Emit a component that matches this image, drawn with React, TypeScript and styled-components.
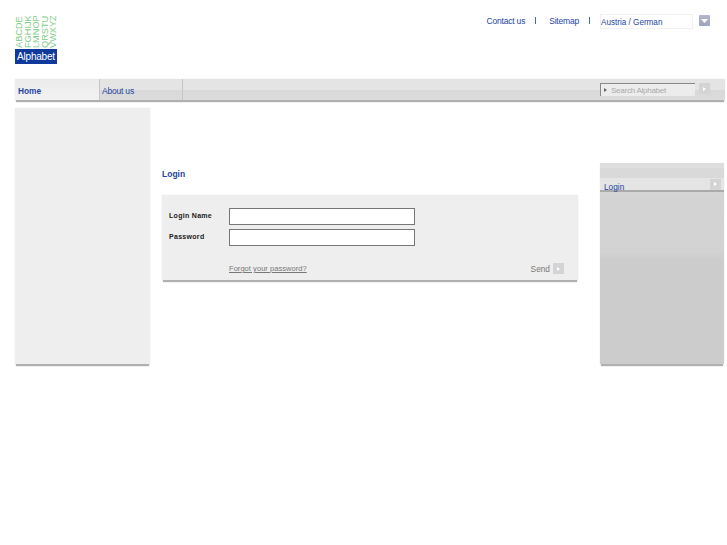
import styled, { createGlobalStyle } from "styled-components";

const panelShadow = "0 3px 1px -1px #b0b0b0, 0 0 1px #e2e2e2";

const Global = createGlobalStyle`
  html, body {
    margin: 0;
    padding: 0;
    background: #fff;
    font-family: "Liberation Sans", Arial, sans-serif;
    font-size: 8px;
    color: #24459f;
  }
`;

const Page = styled.div`
  width: 727px;
  height: 545px;
  box-sizing: border-box;
  padding: 15px 2px 0 15px;
  overflow: hidden;
`;

const Header = styled.header`
  display: flex;
  justify-content: space-between;
  height: 64px;
`;

const Logo = styled.div`
  width: 42px;
  display: flex;
  flex-direction: column;
`;

const LetterColumns = styled.div`
  height: 34px;
  width: 42px;
  display: flex;
  justify-content: space-between;
`;

const LetterSlot = styled.div`
  width: 8px;
  height: 33px;
`;

const LetterRow = styled.span`
  display: block;
  width: max-content;
  transform-origin: 0 0;
  transform: translate(0, 33px) rotate(-90deg);
  white-space: nowrap;
  font-size: 9.2px;
  line-height: 8px;
  color: #7fcc86;
`;

const LogoName = styled.div`
  height: 15px;
  background: #0f3a9c;
  color: #fff;
  font-size: 10px;
  line-height: 15px;
  text-align: center;
  letter-spacing: -0.2px;
`;

const TopLinks = styled.div`
  display: flex;
  align-items: flex-start;
  height: 20px;
  padding-right: 15px;
`;

const TopLink = styled.a`
  font-size: 8.5px;
  letter-spacing: -0.2px;
  line-height: 13px;
  color: #24459f;
`;

const Divider = styled.span`
  width: 1px;
  height: 7px;
  margin: 2px 13px 0 10px;
  background: #4a68b0;
`;

const CountrySelect = styled.div`
  width: 91px;
  height: 13px;
  margin: -1px 0 0 -3px;
  border: 1px solid #f1f1f1;
  font-size: 8.15px;
  line-height: 15px;
  color: #24459f;
`;

const SelectButton = styled.div`
  width: 11px;
  height: 11px;
  margin-left: 6px;
  border-radius: 1px;
  background: linear-gradient(#b3b7cc, #9ea3bd);
  display: flex;
  align-items: center;
  justify-content: center;
`;

const Nav = styled.nav`
  height: 21px;
  display: flex;
  align-items: stretch;
  background: linear-gradient(#e4e4e4 0, #e4e4e4 11px, #d8d8d8 11px, #dcdcdc 100%);
  box-shadow: ${panelShadow};
`;

const NavItem = styled.a<{ $active?: boolean }>`
  width: ${(p) => (p.$active ? "81px" : "80px")};
  padding: 2px 0 0 ${(p) => (p.$active ? "3px" : "2px")};
  box-sizing: content-box;
  height: 19px;
  display: flex;
  align-items: center;
  font-size: ${(p) => (p.$active ? "8.3px" : "8.5px")};
  letter-spacing: ${(p) => (p.$active ? "0" : "-0.2px")};
  font-weight: ${(p) => (p.$active ? 700 : 400)};
  color: #24459f;
  border-right: 1px solid #c6c6c6;
  background: ${(p) => (p.$active ? "linear-gradient(#ebebeb, #f2f2f2)" : "transparent")};
`;

const SearchWrap = styled.div`
  margin-left: auto;
  display: flex;
  align-items: flex-start;
  gap: 4px;
  padding: 4px 15px 0 0;
`;

const SearchBox = styled.div`
  width: 91px;
  height: 12px;
  display: flex;
  align-items: center;
  gap: 4px;
  padding-left: 3px;
  background: #ececec;
  border-top: 1px solid #888;
  border-left: 1px solid #888;
  font-size: 8px;
  letter-spacing: -0.25px;
  color: #aaa;
`;

const Arrow = styled.span`
  width: 0;
  height: 0;
  border-left: 3px solid #666;
  border-top: 2px solid transparent;
  border-bottom: 2px solid transparent;
`;

const PlayButton = styled.div`
  width: 11px;
  height: 11px;
  background: #d4d4d4;
  display: flex;
  align-items: center;
  justify-content: center;
  flex: none;
`;

const PlayMark = styled.span`
  width: 0;
  height: 0;
  border-left: 3px solid #fff;
  border-top: 2.5px solid transparent;
  border-bottom: 2.5px solid transparent;
`;

const Content = styled.div`
  display: flex;
  align-items: flex-start;
  margin-top: 8px;
`;

const SidePanel = styled.aside`
  width: 135px;
  height: 256px;
  background: #eeeeee;
  box-shadow: ${panelShadow};
`;

const Main = styled.main`
  width: 416px;
  margin: 60px 0 0 12px;
`;

const Title = styled.h1`
  margin: 0 0 15px;
  font-size: 8.5px;
  line-height: 12px;
  font-weight: 700;
  color: #24459f;
`;

const FormBox = styled.form`
  height: 85px;
  box-sizing: border-box;
  padding: 13px 14px 0 7px;
  background: #eeeeee;
  box-shadow: ${panelShadow};
`;

const FieldRow = styled.div`
  display: flex;
  align-items: flex-start;
  margin-bottom: 4px;
`;

const FieldLabel = styled.label`
  width: 60px;
  font-size: 7px;
  line-height: 16px;
  font-weight: 700;
  letter-spacing: 0.3px;
  color: #222;
`;

const FieldInput = styled.input`
  width: 186px;
  height: 17px;
  box-sizing: border-box;
  margin: 0;
  padding: 0 3px;
  background: #fff;
  border: 1px solid #777;
  outline: none;
`;

const FormFooter = styled.div`
  display: flex;
  align-items: center;
  justify-content: space-between;
  margin: 17px 0 0 60px;
`;

const ForgotLink = styled.a`
  font-size: 7.5px;
  letter-spacing: 0.05px;
  color: #777;
  text-decoration: underline;
`;

const SendWrap = styled.div`
  display: flex;
  align-items: center;
  gap: 3px;
  font-size: 8.3px;
  color: #777;
`;

const RightPanel = styled.aside`
  width: 124px;
  height: 201px;
  margin: 55px 0 0 22px;
  background: linear-gradient(#dadada 0, #d3d3d3 36px, #d2d2d2 89px, #cccccc 97px, #cccccc 100%);
  box-shadow: ${panelShadow};
`;

const RightTop = styled.div`
  height: 15px;
  background: linear-gradient(#dedede 0, #dedede 5px, #d9d9d9 5px, #d9d9d9 100%);
`;

const RightItem = styled.a`
  height: 12px;
  display: flex;
  align-items: center;
  justify-content: space-between;
  padding: 0 3px 0 4px;
  background: #e4e4e4;
  border-bottom: 2px solid #aaa;
  font-size: 8.3px;
  color: #24459f;
`;

const RightItemLabel = styled.span`
  margin-top: 6px;
`;

const letterRows = ["ABCDE", "FGHIJK", "LMNOP", "QRSTU", "VWXYZ"];

export default function App() {
  return (
    <>
      <Global />
      <Page>
        <Header>
          <Logo>
            <LetterColumns>
              {letterRows.map((row) => (
                <LetterSlot key={row}>
                  <LetterRow>{row}</LetterRow>
                </LetterSlot>
              ))}
            </LetterColumns>
            <LogoName>Alphabet</LogoName>
          </Logo>
          <TopLinks>
            <TopLink>Contact us</TopLink>
            <Divider />
            <TopLink>Sitemap</TopLink>
            <Divider />
            <CountrySelect>Austria / German</CountrySelect>
            <SelectButton>
              <svg width="7" height="4" viewBox="0 0 7 4">
                <path d="M0 0h7L3.5 4z" fill="#fff" />
              </svg>
            </SelectButton>
          </TopLinks>
        </Header>

        <Nav>
          <NavItem $active>Home</NavItem>
          <NavItem>About us</NavItem>
          <SearchWrap>
            <SearchBox>
              <Arrow />
              Search Alphabet
            </SearchBox>
            <PlayButton>
              <PlayMark />
            </PlayButton>
          </SearchWrap>
        </Nav>

        <Content>
          <SidePanel />
          <Main>
            <Title>Login</Title>
            <FormBox>
              <FieldRow>
                <FieldLabel>Login Name</FieldLabel>
                <FieldInput type="text" />
              </FieldRow>
              <FieldRow>
                <FieldLabel>Password</FieldLabel>
                <FieldInput type="password" />
              </FieldRow>
              <FormFooter>
                <ForgotLink>Forgot your password?</ForgotLink>
                <SendWrap>
                  Send
                  <PlayButton>
                    <PlayMark />
                  </PlayButton>
                </SendWrap>
              </FormFooter>
            </FormBox>
          </Main>
          <RightPanel>
            <RightTop />
            <RightItem>
              <RightItemLabel>Login</RightItemLabel>
              <PlayButton>
                <PlayMark />
              </PlayButton>
            </RightItem>
          </RightPanel>
        </Content>
      </Page>
    </>
  );
}
